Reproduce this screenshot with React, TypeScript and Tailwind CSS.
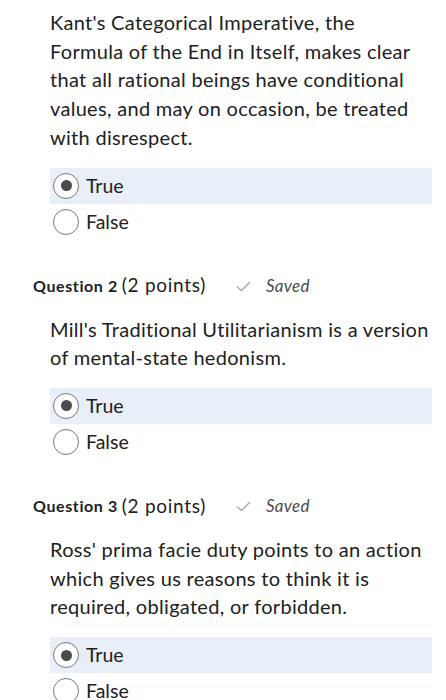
import React from "react";

type Q = { num?: number; text: string };

const questions: Q[] = [
  {
    text: "Kant's Categorical Imperative, the Formula of the End in Itself, makes clear that all rational beings have conditional values, and may on occasion, be treated with disrespect.",
  },
  { num: 2, text: "Mill's Traditional Utilitarianism is a version of mental-state hedonism." },
  {
    num: 3,
    text: "Ross' prima facie duty points to an action which gives us reasons to think it is required, obligated, or forbidden.",
  },
];

function Radio({ checked }: { checked: boolean }) {
  return (
    <span className="flex h-[26px] w-[26px] shrink-0 items-center justify-center rounded-full border-[1.5px] border-[#75797c] bg-white">
      {checked && <span className="h-[11px] w-[11px] rounded-full bg-[#494c4e]" />}
    </span>
  );
}

function Option({ label, checked }: { label: string; checked: boolean }) {
  return (
    <div className={`flex h-9 items-center gap-[7px] pl-[3px] ${checked ? "bg-[#e9eff9]" : ""}`}>
      <Radio checked={checked} />
      <span className="text-[19.5px] text-[#202122]">{label}</span>
    </div>
  );
}

function SavedCheck() {
  return (
    <svg width="15" height="11" viewBox="0 0 15 11" fill="none" className="mt-[2px]">
      <path d="M1.5 6 L5.5 9.5 L13.5 1.5" stroke="#a9adb0" strokeWidth="1.6" strokeLinecap="round" strokeLinejoin="round" />
    </svg>
  );
}

export default function App() {
  return (
    <div className="min-h-screen bg-white pr-[14px] pl-[33px] pt-[8px]" style={{ fontFamily: "Lato, 'Noto Sans', sans-serif" }}>
      {questions.map((q, i) => (
        <div key={i} className={i > 0 ? "mt-[34px]" : ""}>
          {q.num && (
            <div className="mb-[17px] flex h-6 items-center text-[#202122]">
              <span className="text-[16px] font-bold tracking-[0.6px]">Question {q.num}</span>
              <span className="ml-[4px] text-[19px] tracking-[0.7px]">(2 points)</span>
              <span className="ml-[30px] flex items-center gap-[15px]">
                <SavedCheck />
                <span className="text-[17px] italic tracking-[0.3px] text-[#494c4e]">Saved</span>
              </span>
            </div>
          )}
          <div className="pl-[17px]">
            <p className="pr-[2px] text-[20px] leading-[28.7px] tracking-[0.3px] text-[#202122]">{q.text}</p>
            <div className="mt-[16px]">
              <Option label="True" checked />
              <Option label="False" checked={false} />
            </div>
          </div>
        </div>
      ))}
    </div>
  );
}
